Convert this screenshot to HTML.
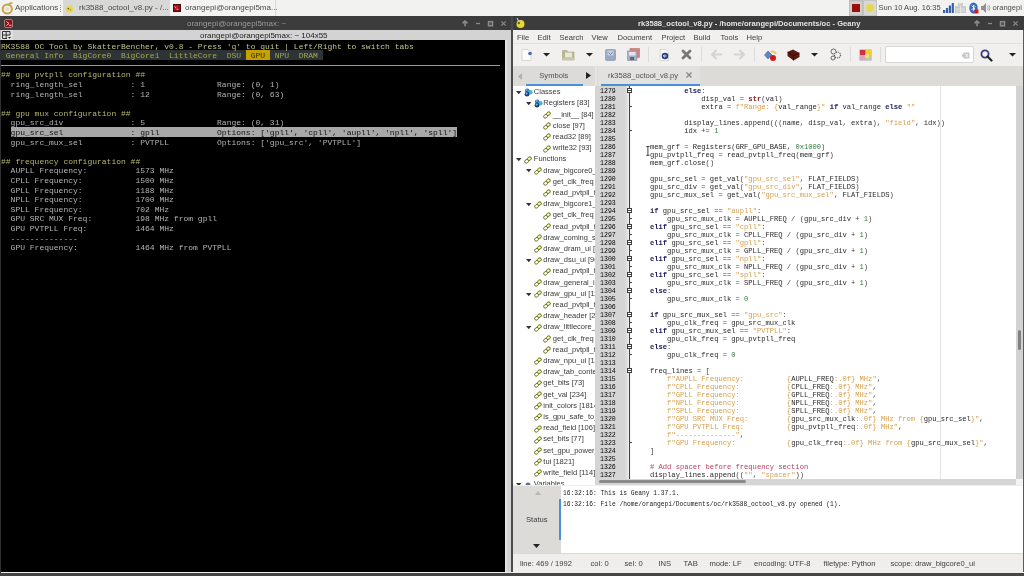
<!DOCTYPE html><html><head><meta charset="utf-8"><style>
*{margin:0;padding:0;box-sizing:border-box}
html,body{width:1024px;height:576px;overflow:hidden;background:#efeeed}
body{position:relative;font-family:"Liberation Sans",sans-serif}
.abs{position:absolute}
.t{position:absolute;white-space:pre;line-height:1}
.mono{font-family:"Liberation Mono",monospace}
</style></head><body>
<div id="root" style="position:absolute;left:0;top:0;width:1024px;height:576px;overflow:hidden;will-change:transform">

<div class="abs" style="left:0;top:0;width:1024px;height:16px;background:#f2f2f1"></div>
<div class="abs" style="left:0;top:16px;width:512px;height:14px;background:#3c3c3c"></div>
<div class="abs" style="left:0;top:30px;width:511px;height:10px;background:#d3d3d3"></div>
<div class="abs" style="left:0;top:40px;width:511px;height:532px;background:#000"></div>
<div class="abs" style="left:505px;top:40px;width:6px;height:532px;background:linear-gradient(90deg,#eeeeee,#d4d4d4 40%,#d4d4d4)"></div>
<div class="abs" style="left:512px;top:16px;width:512px;height:14px;background:#3c3c3c"></div>
<div class="abs" style="left:512px;top:30px;width:512px;height:13px;background:#f1f0ef"></div>
<div class="abs" style="left:512px;top:43px;width:512px;height:23px;background:#f1f0ef"></div>
<div class="abs" style="left:512px;top:66px;width:511px;height:20px;background:#dcdbd8"></div>
<div class="abs" style="left:512px;top:86px;width:83px;height:399px;background:#fff"></div>
<div class="abs" style="left:595px;top:86px;width:429px;height:399px;background:#fff"></div>
<div class="abs" style="left:595px;top:86px;width:30px;height:399px;background:#d5d5d5"></div>
<div class="abs" style="left:512px;top:485.5px;width:512px;height:68px;background:#fff"></div>
<div class="abs" style="left:512px;top:485.5px;width:49px;height:68px;background:#dcdbd8"></div>
<div class="abs" style="left:512px;top:553px;width:512px;height:19.8px;background:#efeeed"></div>
<div class="abs" style="left:0;top:572.8px;width:1024px;height:3.2px;background:#454545"></div>
<div class="abs" style="left:0;top:40px;width:1px;height:533px;background:#303030"></div>
<div class="abs" style="left:1.0px;top:50.20px;width:321.60px;height:9.6px;background:#2e3436"></div>
<div class="abs" style="left:245.80px;top:50.20px;width:24.00px;height:9.6px;background:#c4a000"></div>
<div class="abs" style="left:10.60px;top:127.00px;width:446.40px;height:9.6px;background:#a8a8a8"></div>
<div class="abs" style="left:1px;top:64.6px;width:499px;height:1px;background:#9a9a9a"></div>
<div class="abs mono" style="left:1.0px;top:41.5px;font-size:8px;line-height:9.6px;white-space:pre;color:#c8c8c8">
<div class="abs" style="left:0;top:0.00px;height:9.6px"><span style="color:#c4c48a">RK3588 OC Tool by SkatterBencher, v0.8 - Press 'q' to quit | Left/Right to switch tabs</span></div>
<div class="abs" style="left:0;top:9.60px;height:9.6px"><span style="color:#a6a64c"> General Info  BigCore0  BigCore1  LittleCore  DSU </span><span style="color:#2e2e10"> GPU </span><span style="color:#a6a64c"> NPU  DRAM </span></div>
<div class="abs" style="left:0;top:28.80px;height:9.6px"><span style="color:#b8b870">## gpu pvtpll configuration ##</span></div>
<div class="abs" style="left:0;top:38.40px;height:9.6px"><span style="color:#b4b4b4">  ring_length_sel          : 1               Range: (0, 1)</span></div>
<div class="abs" style="left:0;top:48.00px;height:9.6px"><span style="color:#b4b4b4">  ring_length_sel          : 12              Range: (0, 63)</span></div>
<div class="abs" style="left:0;top:67.20px;height:9.6px"><span style="color:#b8b870">## gpu mux configuration ##</span></div>
<div class="abs" style="left:0;top:76.80px;height:9.6px"><span style="color:#b4b4b4">  gpu_src_div              : 5               Range: (0, 31)</span></div>
<div class="abs" style="left:0;top:86.40px;height:9.6px"><span style="color:#101010">  gpu_src_sel              : gpll            Options: ['gpll', 'cpll', 'aupll', 'npll', 'spll']</span></div>
<div class="abs" style="left:0;top:96.00px;height:9.6px"><span style="color:#b4b4b4">  gpu_src_mux_sel          : PVTPLL          Options: ['gpu_src', 'PVTPLL']</span></div>
<div class="abs" style="left:0;top:115.20px;height:9.6px"><span style="color:#b8b870">## frequency configuration ##</span></div>
<div class="abs" style="left:0;top:124.80px;height:9.6px"><span style="color:#b4b4b4">  AUPLL Frequency:          1573 MHz</span></div>
<div class="abs" style="left:0;top:134.40px;height:9.6px"><span style="color:#b4b4b4">  CPLL Frequency:           1500 MHz</span></div>
<div class="abs" style="left:0;top:144.00px;height:9.6px"><span style="color:#b4b4b4">  GPLL Frequency:           1188 MHz</span></div>
<div class="abs" style="left:0;top:153.60px;height:9.6px"><span style="color:#b4b4b4">  NPLL Frequency:           1700 MHz</span></div>
<div class="abs" style="left:0;top:163.20px;height:9.6px"><span style="color:#b4b4b4">  SPLL Frequency:           702 MHz</span></div>
<div class="abs" style="left:0;top:172.80px;height:9.6px"><span style="color:#b4b4b4">  GPU SRC MUX Freq:         198 MHz from gpll</span></div>
<div class="abs" style="left:0;top:182.40px;height:9.6px"><span style="color:#b4b4b4">  GPU PVTPLL Freq:          1464 MHz</span></div>
<div class="abs" style="left:0;top:192.00px;height:9.6px"><span style="color:#b4b4b4">  --------------            </span></div>
<div class="abs" style="left:0;top:201.60px;height:9.6px"><span style="color:#b4b4b4">  GPU Frequency:            1464 MHz from PVTPLL</span></div>
</div>
<div class="abs" style="left:63px;top:0;width:107px;height:16px;background:#d8d8d6"></div>
<div class="abs" style="left:170px;top:0;width:106px;height:16px;background:#f3f3f2;border-right:1px solid #d8d8d8"></div>
<svg class="abs" style="left:1px;top:1px" width="13" height="14" viewBox="0 0 13 14"><circle cx="6.3" cy="8" r="4.6" fill="none" stroke="#c9a24a" stroke-width="2"/><circle cx="6.3" cy="8" r="2" fill="#e8dcb8"/><path d="M7 3.2 C8 1.2 10.5 0.8 12 1.5 C11 3.2 9 3.8 7 3.2Z" fill="#c9a24a"/></svg>
<div class="t" style="left:15px;top:3.9px;font-size:8px;color:#4a4a4a;">Applications</div>
<div class="abs" style="left:60px;top:5px;width:1px;height:7px;border-left:1px dotted #999"></div>
<svg class="abs" style="left:65px;top:4px" width="9" height="9" viewBox="0 0 9 9"><circle cx="4.5" cy="5" r="3.5" fill="#e8d84a"/><circle cx="3.3" cy="4.6" r="0.9" fill="#6a6010"/><circle cx="5.6" cy="5.8" r="0.7" fill="#9a9020"/></svg>
<div class="t" style="left:79px;top:3.9px;font-size:8px;color:#4a4a4a;">rk3588_octool_v8.py - /...</div>
<div class="abs" style="left:172.5px;top:4px;width:8px;height:8px;background:radial-gradient(circle at 40% 35%,#d02030,#700810);border:0.6px solid #401010"></div><svg class="abs" style="left:174px;top:6px" width="5" height="4" viewBox="0 0 5 4"><path d="M0.5 0.5 L2 2 M2.5 3.3 H4.5" stroke="#f0c0c0" stroke-width="0.8"/></svg>
<div class="t" style="left:185px;top:3.9px;font-size:8px;color:#4a4a4a;">orangepi@orangepi5ma...</div>
<div class="abs" style="left:849px;top:0;width:14px;height:16px;background:#cfcfcd;border:1px solid #bdbdbb"></div>
<div class="abs" style="left:852px;top:4px;width:8px;height:8px;background:#9a1010"></div>
<div class="abs" style="left:863px;top:0;width:14px;height:16px;background:#d8d8d6;border:1px solid #c4c4c2"></div>
<div class="abs" style="left:866px;top:4px;width:8px;height:8px;border-radius:50%;background:#e6d84a"></div>
<div class="t" style="left:878.5px;top:4.2px;font-size:7.55px;color:#4a4a4a;">Sun 10 Aug. 16:35</div>
<svg class="abs" style="left:943px;top:3px" width="11" height="10" viewBox="0 0 11 10"><rect x="0" y="7" width="2.2" height="3" fill="#3b5ea8"/><rect x="2.9" y="5" width="2.2" height="5" fill="#3b5ea8"/><rect x="5.8" y="2.5" width="2.2" height="7.5" fill="#3b5ea8"/><rect x="8.7" y="0" width="2.2" height="10" fill="#3b5ea8"/></svg>
<svg class="abs" style="left:955px;top:3px" width="11" height="10" viewBox="0 0 11 10"><rect x="0" y="3" width="11" height="7" fill="#c8c8c8"/><rect x="3" y="0" width="5" height="4" fill="#d0d0d0"/><path d="M1 6 H10 M1 8 H10 M5.5 3 V10" stroke="#e8e8e8" stroke-width="0.8"/></svg>
<svg class="abs" style="left:969px;top:2px" width="10" height="12" viewBox="0 0 10 12"><ellipse cx="4.5" cy="6" rx="4.2" ry="5.6" fill="#3a6cc0"/><path d="M2.5 3.5 L6 7 L4.5 8.5 V3 L6 4.5 L2.5 8" stroke="#fff" stroke-width="0.8" fill="none"/><rect x="5.5" y="7.5" width="4" height="4" fill="#d02020"/></svg>
<svg class="abs" style="left:981px;top:3px" width="10" height="10" viewBox="0 0 10 10"><path d="M0 3 H2 L5 0 V10 L2 7 H0Z" fill="#909090"/><path d="M6.5 3 Q8 5 6.5 7 M7.8 1.8 Q10 5 7.8 8.2" stroke="#a0a0a0" stroke-width="0.8" fill="none"/></svg>
<div class="t" style="left:992.5px;top:4.2px;font-size:7.55px;color:#4a4a4a;">orangepi</div>
<div class="abs" style="left:4px;top:19px;width:9px;height:9px;border-radius:2px;background:#8c1018;border:1px solid #a08080"></div>
<svg class="abs" style="left:6px;top:21px" width="6" height="5" viewBox="0 0 6 5"><path d="M0.5 0.5 L3 2.5 L0.5 4.5" stroke="#f0d0d0" stroke-width="0.9" fill="none"/><path d="M3 4.3 H5.5" stroke="#f0d0d0" stroke-width="0.9"/></svg>
<div class="t" style="left:187px;top:19.6px;font-size:8px;color:#9a9a9a;">orangepi@orangepi5max: ~</div>
<svg class="abs" style="left:461px;top:20px" width="47" height="7" viewBox="0 0 47 7"><path d="M1.6 3.4 L4 1 L6.4 3.4" stroke="#8a8a8a" stroke-width="1.6" fill="none"/><path d="M4 1.5 V6.2" stroke="#8a8a8a" stroke-width="1.6"/><path d="M15 3.5 H19" stroke="#8a8a8a" stroke-width="1.3"/><rect x="27.5" y="1.6" width="4" height="4.2" stroke="#8a8a8a" stroke-width="1.5" fill="#4a4a4a"/><path d="M40.3 1.3 L44.7 5.7 M44.7 1.3 L40.3 5.7" stroke="#8a8a8a" stroke-width="1.2"/></svg>
<div class="abs" style="left:0;top:30px;width:1px;height:10px;background:#bdbdbd"></div>
<div class="abs" style="left:1px;top:30px;width:12px;height:10px;background:#e0e0e0"></div>
<svg class="abs" style="left:2px;top:31px" width="9" height="8" viewBox="0 0 9 8"><path d="M0.5 0.5 H8 V4 M0.5 0.5 V7.5 H5 M0.5 4 H8 M4.2 0.5 V7.5" stroke="#202020" stroke-width="0.9" fill="none"/><path d="M6 6 H9 L7.5 7.8Z" fill="#202020"/></svg>
<div class="t" style="left:200px;top:32.4px;font-size:8px;color:#202020;">orangepi@orangepi5max: ~ 104x55</div>
<svg class="abs" style="left:515px;top:17px" width="11" height="12" viewBox="0 0 11 12"><circle cx="5.5" cy="7" r="4" fill="#e8d830"/><circle cx="3.8" cy="6" r="1.2" fill="#6a6a20"/><path d="M2 1 L3.5 4" stroke="#e0e0e0" stroke-width="1"/></svg>
<div class="t" style="left:638px;top:19.9px;font-size:7.6px;color:#e4e4e4;font-weight:bold">rk3588_octool_v8.py - /home/orangepi/Documents/oc - Geany</div>
<svg class="abs" style="left:973px;top:20px" width="47" height="7" viewBox="0 0 47 7"><path d="M1.6 3.4 L4 1 L6.4 3.4" stroke="#8a8a8a" stroke-width="1.6" fill="none"/><path d="M4 1.5 V6.2" stroke="#8a8a8a" stroke-width="1.6"/><path d="M15 3.5 H19" stroke="#8a8a8a" stroke-width="1.3"/><rect x="27.5" y="1.6" width="4" height="4.2" stroke="#8a8a8a" stroke-width="1.5" fill="#4a4a4a"/><path d="M40.3 1.3 L44.7 5.7 M44.7 1.3 L40.3 5.7" stroke="#8a8a8a" stroke-width="1.2"/></svg>
<div class="abs" style="left:511px;top:16px;width:2px;height:556px;background:#4a4a4a"></div>
<div class="t" style="left:517px;top:33.9px;font-size:7.6px;color:#3c3c3c;">File</div>
<div class="t" style="left:537.5px;top:33.9px;font-size:7.6px;color:#3c3c3c;">Edit</div>
<div class="t" style="left:559.5px;top:33.9px;font-size:7.6px;color:#3c3c3c;">Search</div>
<div class="t" style="left:591.5px;top:33.9px;font-size:7.6px;color:#3c3c3c;">View</div>
<div class="t" style="left:617.5px;top:33.9px;font-size:7.6px;color:#3c3c3c;">Document</div>
<div class="t" style="left:661.5px;top:33.9px;font-size:7.6px;color:#3c3c3c;">Project</div>
<div class="t" style="left:693.5px;top:33.9px;font-size:7.6px;color:#3c3c3c;">Build</div>
<div class="t" style="left:720.5px;top:33.9px;font-size:7.6px;color:#3c3c3c;">Tools</div>
<div class="t" style="left:746.5px;top:33.9px;font-size:7.6px;color:#3c3c3c;">Help</div>
<div class="abs" style="left:513px;top:42.5px;width:511px;height:1px;background:#e2e1df"></div>
<svg class="abs" style="left:521px;top:49px" width="12" height="12" viewBox="0 0 12 12"><path d="M1 0.5 H7 L10 3.5 V11.5 H1Z" fill="#fbfbfb" stroke="#cfcfcf" stroke-width="0.8"/><circle cx="9" cy="4.5" r="1.8" fill="#4a6ab0"/></svg>
<svg class="abs" style="left:543px;top:53px" width="7" height="4" viewBox="0 0 7 4"><path d="M0 0 H7 L3.5 3.5Z" fill="#222"/></svg>
<svg class="abs" style="left:562px;top:49px" width="13" height="12" viewBox="0 0 13 12"><path d="M0.5 1.5 H5 L6 3 H12 V11 H0.5Z" fill="#b8b890" stroke="#a8a880" stroke-width="0.6"/><rect x="3" y="3.5" width="7" height="5" fill="#e8e8d8"/><rect x="0.5" y="8.5" width="12" height="2.5" fill="#c8c8a8"/></svg>
<svg class="abs" style="left:586px;top:53px" width="7" height="4" viewBox="0 0 7 4"><path d="M0 0 H7 L3.5 3.5Z" fill="#222"/></svg>
<svg class="abs" style="left:605px;top:49px" width="11" height="12" viewBox="0 0 11 12"><rect x="0.5" y="0.5" width="10" height="11" rx="1" fill="#9aa8c0" stroke="#8090a8" stroke-width="0.6"/><rect x="2.5" y="1.5" width="6" height="5" fill="#c8d0e0"/><path d="M3.5 3.5 L5.5 5.5 L7.5 3.5" stroke="#6a7a98" stroke-width="0.9" fill="none"/></svg>
<svg class="abs" style="left:627px;top:48px" width="13" height="13" viewBox="0 0 13 13"><rect x="3" y="0.5" width="9.5" height="9" fill="#d88080" stroke="#b06060" stroke-width="0.5"/><rect x="0.5" y="3" width="9.5" height="9.5" fill="#a8b0c0" stroke="#8890a0" stroke-width="0.6"/><rect x="2" y="4" width="6.5" height="3.5" fill="#e0e4ec"/><rect x="3" y="9" width="4" height="3" fill="#606878"/></svg>
<div class="abs" style="left:648px;top:47px;width:1px;height:15px;background:#dddcda"></div>
<svg class="abs" style="left:659px;top:49px" width="11" height="12" viewBox="0 0 11 12"><path d="M1 0.5 H7 L9.5 3 V11.5 H1Z" fill="#fbfbfb" stroke="#cfcfcf" stroke-width="0.8"/><circle cx="6" cy="7" r="3.3" fill="#2a3e78"/><path d="M7.5 7 H4.5 M5.8 5.6 L4.4 7 L5.8 8.4" stroke="#fff" stroke-width="0.9" fill="none"/></svg>
<svg class="abs" style="left:681px;top:49px" width="11" height="11" viewBox="0 0 11 11"><path d="M2 2 L9 9 M9 2 L2 9" stroke="#777" stroke-width="2.8" stroke-linecap="round"/></svg>
<div class="abs" style="left:701px;top:47px;width:1px;height:15px;background:#dddcda"></div>
<svg class="abs" style="left:711px;top:49px" width="12" height="11" viewBox="0 0 12 11"><path d="M5.5 1 L1 5.5 L5.5 10 M1 5.5 H11" stroke="#d4d4d4" stroke-width="2.2" fill="none"/></svg>
<svg class="abs" style="left:733px;top:49px" width="12" height="11" viewBox="0 0 12 11"><path d="M6.5 1 L11 5.5 L6.5 10 M11 5.5 H1" stroke="#d4d4d4" stroke-width="2.2" fill="none"/></svg>
<div class="abs" style="left:754px;top:47px;width:1px;height:15px;background:#dddcda"></div>
<svg class="abs" style="left:764px;top:48px" width="13" height="14" viewBox="0 0 13 14"><path d="M4 3 L8 7 L4 11 L0.5 7Z" fill="#5a88c8" stroke="#3a5890" stroke-width="0.5"/><path d="M6.5 4 A4 4 0 0 1 12 6" stroke="#e8d060" stroke-width="2" fill="none"/><circle cx="9" cy="10" r="3" fill="#d01818"/></svg>
<svg class="abs" style="left:787px;top:49px" width="13" height="12" viewBox="0 0 13 12"><path d="M0.5 3 L6 0.5 L12.5 4 L12.5 8 L6.5 11.5 L0.5 7Z" fill="#5a1a10"/><path d="M0.5 3 L6.5 6.5 L12.5 4 M6.5 6.5 V11.5" stroke="#2a0a05" stroke-width="0.7" fill="none"/></svg>
<svg class="abs" style="left:811px;top:53px" width="7" height="4" viewBox="0 0 7 4"><path d="M0 0 H7 L3.5 3.5Z" fill="#222"/></svg>
<svg class="abs" style="left:830px;top:48px" width="12" height="13" viewBox="0 0 12 13"><circle cx="3.5" cy="3.5" r="2.5" fill="#f0f0f0" stroke="#666" stroke-width="1"/><circle cx="7.5" cy="7" r="3" fill="#f0f0f0" stroke="#666" stroke-width="1.2" stroke-dasharray="1.2 0.8"/><circle cx="3" cy="10" r="2" fill="#f0f0f0" stroke="#666" stroke-width="1"/></svg>
<div class="abs" style="left:850px;top:47px;width:1px;height:15px;background:#dddcda"></div>
<svg class="abs" style="left:859px;top:49px" width="13" height="12" viewBox="0 0 13 12"><rect x="0.5" y="0.5" width="12" height="11" fill="#a0a8b8"/><rect x="1" y="1" width="5.5" height="5" fill="#d03040"/><rect x="6.5" y="1" width="5.5" height="5" fill="#f0d030"/><rect x="1" y="6" width="5.5" height="5" fill="#e0a0c0"/><rect x="6.5" y="6" width="5.5" height="5" fill="#c0c8a0"/><circle cx="8" cy="7" r="2.2" fill="#f0e080"/></svg>
<div class="abs" style="left:880px;top:47px;width:1px;height:15px;background:#dddcda"></div>
<div class="abs" style="left:885px;top:46px;width:89px;height:17px;background:#fff;border:1px solid #d6d5d3;border-radius:2px"></div>
<svg class="abs" style="left:961px;top:52px" width="9" height="7" viewBox="0 0 9 7"><path d="M0.5 3.5 L3 0.5 H8.5 V6.5 H3Z" fill="#c8c8c8"/><path d="M4.5 2 L7 5 M7 2 L4.5 5" stroke="#fff" stroke-width="0.8"/></svg>
<svg class="abs" style="left:980px;top:49px" width="13" height="13" viewBox="0 0 13 13"><circle cx="5" cy="5" r="3.6" fill="none" stroke="#3a3a78" stroke-width="1.8"/><path d="M7.5 7.5 L11.5 11.5" stroke="#222" stroke-width="2.2" stroke-linecap="round"/></svg>
<svg class="abs" style="left:1009px;top:53px" width="7" height="4" viewBox="0 0 7 4"><path d="M0 0 H7 L3.5 3.5Z" fill="#222"/></svg>
<div class="abs" style="left:1023px;top:30px;width:1px;height:542px;background:#5a5a5a"></div>
<div class="abs" style="left:595px;top:66px;width:2px;height:20px;background:#e6e5e3"></div>
<svg class="abs" style="left:518px;top:73px" width="4" height="7" viewBox="0 0 4 7"><path d="M4 0 V7 L0 3.5Z" fill="#b0b0b0"/></svg>
<div class="t" style="left:539.3px;top:72.2px;font-size:7.6px;color:#505050;">Symbols</div>
<svg class="abs" style="left:586px;top:72px" width="5" height="7" viewBox="0 0 5 7"><path d="M0 0 V7 L5 3.5Z" fill="#222"/></svg>
<div class="abs" style="left:526px;top:84px;width:57px;height:2px;background:#4a90d9"></div>
<div class="abs" style="left:598px;top:66px;width:102px;height:20px;background:#e2e1de"></div>
<div class="t" style="left:608px;top:72.2px;font-size:7.6px;color:#505050;">rk3588_octool_v8.py</div>
<svg class="abs" style="left:686px;top:72px" width="6" height="6" viewBox="0 0 6 6"><path d="M0.5 0.5 L5.5 5.5 M5.5 0.5 L0.5 5.5" stroke="#888" stroke-width="1.4"/></svg>
<div class="abs" style="left:601px;top:84px;width:99px;height:2px;background:#4a90d9"></div>
<div class="abs" style="left:513px;top:86px;width:82px;height:399px;overflow:hidden">
<svg class="abs" style="left:3.0px;top:5.0px" width="6" height="4" viewBox="0 0 6 4"><path d="M0 0 H5.5 L2.75 3.2Z" fill="#333"/></svg>
<svg class="abs" style="left:11.0px;top:2.1px" width="9" height="9" viewBox="0 0 9 9"><circle cx="3.2" cy="2.6" r="2.2" fill="#2a6ab0"/><circle cx="6.3" cy="4.3" r="2.3" fill="#40b8c8"/><circle cx="3" cy="6.2" r="2.4" fill="#1a3a88"/><circle cx="2.6" cy="5.6" r="1" fill="#80c0f0"/><circle cx="2.8" cy="2" r="0.8" fill="#a0d0f0"/></svg>
<div class="t" style="left:20.8px;top:2.2px;font-size:7.5px;color:#3a3a3a">Classes</div>
<svg class="abs" style="left:12.5px;top:16.2px" width="6" height="4" viewBox="0 0 6 4"><path d="M0 0 H5.5 L2.75 3.2Z" fill="#333"/></svg>
<svg class="abs" style="left:20.5px;top:13.3px" width="9" height="9" viewBox="0 0 9 9"><circle cx="3.2" cy="2.6" r="2.2" fill="#2a6ab0"/><circle cx="6.3" cy="4.3" r="2.3" fill="#40b8c8"/><circle cx="3" cy="6.2" r="2.4" fill="#1a3a88"/><circle cx="2.6" cy="5.6" r="1" fill="#80c0f0"/><circle cx="2.8" cy="2" r="0.8" fill="#a0d0f0"/></svg>
<div class="t" style="left:30.3px;top:13.4px;font-size:7.5px;color:#3a3a3a">Registers [83]</div>
<svg class="abs" style="left:30.0px;top:25.0px" width="8" height="8" viewBox="0 0 8 8"><ellipse cx="2.6" cy="5.3" rx="2.1" ry="1.7" transform="rotate(-35 2.6 5.3)" fill="none" fill="#e6ea88" stroke="#6a7020" stroke-width="0.9"/><ellipse cx="5.4" cy="2.7" rx="2.1" ry="1.7" transform="rotate(-35 5.4 2.7)" fill="#e6ea88" stroke="#6a7020" stroke-width="0.9"/><ellipse cx="2.6" cy="5.3" rx="0.8" ry="0.5" transform="rotate(-35 2.6 5.3)" fill="#fff"/><ellipse cx="5.4" cy="2.7" rx="0.8" ry="0.5" transform="rotate(-35 5.4 2.7)" fill="#fff"/></svg>
<div class="t" style="left:39.8px;top:24.6px;font-size:7.5px;color:#3a3a3a">__init__ [84]</div>
<svg class="abs" style="left:30.0px;top:36.2px" width="8" height="8" viewBox="0 0 8 8"><ellipse cx="2.6" cy="5.3" rx="2.1" ry="1.7" transform="rotate(-35 2.6 5.3)" fill="none" fill="#e6ea88" stroke="#6a7020" stroke-width="0.9"/><ellipse cx="5.4" cy="2.7" rx="2.1" ry="1.7" transform="rotate(-35 5.4 2.7)" fill="#e6ea88" stroke="#6a7020" stroke-width="0.9"/><ellipse cx="2.6" cy="5.3" rx="0.8" ry="0.5" transform="rotate(-35 2.6 5.3)" fill="#fff"/><ellipse cx="5.4" cy="2.7" rx="0.8" ry="0.5" transform="rotate(-35 5.4 2.7)" fill="#fff"/></svg>
<div class="t" style="left:39.8px;top:35.8px;font-size:7.5px;color:#3a3a3a">close [97]</div>
<svg class="abs" style="left:30.0px;top:47.4px" width="8" height="8" viewBox="0 0 8 8"><ellipse cx="2.6" cy="5.3" rx="2.1" ry="1.7" transform="rotate(-35 2.6 5.3)" fill="none" fill="#e6ea88" stroke="#6a7020" stroke-width="0.9"/><ellipse cx="5.4" cy="2.7" rx="2.1" ry="1.7" transform="rotate(-35 5.4 2.7)" fill="#e6ea88" stroke="#6a7020" stroke-width="0.9"/><ellipse cx="2.6" cy="5.3" rx="0.8" ry="0.5" transform="rotate(-35 2.6 5.3)" fill="#fff"/><ellipse cx="5.4" cy="2.7" rx="0.8" ry="0.5" transform="rotate(-35 5.4 2.7)" fill="#fff"/></svg>
<div class="t" style="left:39.8px;top:47.0px;font-size:7.5px;color:#3a3a3a">read32 [89]</div>
<svg class="abs" style="left:30.0px;top:58.6px" width="8" height="8" viewBox="0 0 8 8"><ellipse cx="2.6" cy="5.3" rx="2.1" ry="1.7" transform="rotate(-35 2.6 5.3)" fill="none" fill="#e6ea88" stroke="#6a7020" stroke-width="0.9"/><ellipse cx="5.4" cy="2.7" rx="2.1" ry="1.7" transform="rotate(-35 5.4 2.7)" fill="#e6ea88" stroke="#6a7020" stroke-width="0.9"/><ellipse cx="2.6" cy="5.3" rx="0.8" ry="0.5" transform="rotate(-35 2.6 5.3)" fill="#fff"/><ellipse cx="5.4" cy="2.7" rx="0.8" ry="0.5" transform="rotate(-35 5.4 2.7)" fill="#fff"/></svg>
<div class="t" style="left:39.8px;top:58.2px;font-size:7.5px;color:#3a3a3a">write32 [93]</div>
<svg class="abs" style="left:3.0px;top:72.2px" width="6" height="4" viewBox="0 0 6 4"><path d="M0 0 H5.5 L2.75 3.2Z" fill="#333"/></svg>
<svg class="abs" style="left:11.0px;top:69.8px" width="8" height="8" viewBox="0 0 8 8"><ellipse cx="2.6" cy="5.3" rx="2.1" ry="1.7" transform="rotate(-35 2.6 5.3)" fill="none" fill="#e6ea88" stroke="#6a7020" stroke-width="0.9"/><ellipse cx="5.4" cy="2.7" rx="2.1" ry="1.7" transform="rotate(-35 5.4 2.7)" fill="#e6ea88" stroke="#6a7020" stroke-width="0.9"/><ellipse cx="2.6" cy="5.3" rx="0.8" ry="0.5" transform="rotate(-35 2.6 5.3)" fill="#fff"/><ellipse cx="5.4" cy="2.7" rx="0.8" ry="0.5" transform="rotate(-35 5.4 2.7)" fill="#fff"/></svg>
<div class="t" style="left:20.8px;top:69.4px;font-size:7.5px;color:#3a3a3a">Functions</div>
<svg class="abs" style="left:12.5px;top:83.4px" width="6" height="4" viewBox="0 0 6 4"><path d="M0 0 H5.5 L2.75 3.2Z" fill="#333"/></svg>
<svg class="abs" style="left:20.5px;top:81.0px" width="8" height="8" viewBox="0 0 8 8"><ellipse cx="2.6" cy="5.3" rx="2.1" ry="1.7" transform="rotate(-35 2.6 5.3)" fill="none" fill="#e6ea88" stroke="#6a7020" stroke-width="0.9"/><ellipse cx="5.4" cy="2.7" rx="2.1" ry="1.7" transform="rotate(-35 5.4 2.7)" fill="#e6ea88" stroke="#6a7020" stroke-width="0.9"/><ellipse cx="2.6" cy="5.3" rx="0.8" ry="0.5" transform="rotate(-35 2.6 5.3)" fill="#fff"/><ellipse cx="5.4" cy="2.7" rx="0.8" ry="0.5" transform="rotate(-35 5.4 2.7)" fill="#fff"/></svg>
<div class="t" style="left:30.3px;top:80.6px;font-size:7.5px;color:#3a3a3a">draw_bigcore0_ui [1001]</div>
<svg class="abs" style="left:30.0px;top:92.2px" width="8" height="8" viewBox="0 0 8 8"><ellipse cx="2.6" cy="5.3" rx="2.1" ry="1.7" transform="rotate(-35 2.6 5.3)" fill="none" fill="#e6ea88" stroke="#6a7020" stroke-width="0.9"/><ellipse cx="5.4" cy="2.7" rx="2.1" ry="1.7" transform="rotate(-35 5.4 2.7)" fill="#e6ea88" stroke="#6a7020" stroke-width="0.9"/><ellipse cx="2.6" cy="5.3" rx="0.8" ry="0.5" transform="rotate(-35 2.6 5.3)" fill="#fff"/><ellipse cx="5.4" cy="2.7" rx="0.8" ry="0.5" transform="rotate(-35 5.4 2.7)" fill="#fff"/></svg>
<div class="t" style="left:39.8px;top:91.8px;font-size:7.5px;color:#3a3a3a">get_clk_freq [1010]</div>
<svg class="abs" style="left:30.0px;top:103.4px" width="8" height="8" viewBox="0 0 8 8"><ellipse cx="2.6" cy="5.3" rx="2.1" ry="1.7" transform="rotate(-35 2.6 5.3)" fill="none" fill="#e6ea88" stroke="#6a7020" stroke-width="0.9"/><ellipse cx="5.4" cy="2.7" rx="2.1" ry="1.7" transform="rotate(-35 5.4 2.7)" fill="#e6ea88" stroke="#6a7020" stroke-width="0.9"/><ellipse cx="2.6" cy="5.3" rx="0.8" ry="0.5" transform="rotate(-35 2.6 5.3)" fill="#fff"/><ellipse cx="5.4" cy="2.7" rx="0.8" ry="0.5" transform="rotate(-35 5.4 2.7)" fill="#fff"/></svg>
<div class="t" style="left:39.8px;top:103.0px;font-size:7.5px;color:#3a3a3a">read_pvtpll_freq [1003]</div>
<svg class="abs" style="left:12.5px;top:117.0px" width="6" height="4" viewBox="0 0 6 4"><path d="M0 0 H5.5 L2.75 3.2Z" fill="#333"/></svg>
<svg class="abs" style="left:20.5px;top:114.6px" width="8" height="8" viewBox="0 0 8 8"><ellipse cx="2.6" cy="5.3" rx="2.1" ry="1.7" transform="rotate(-35 2.6 5.3)" fill="none" fill="#e6ea88" stroke="#6a7020" stroke-width="0.9"/><ellipse cx="5.4" cy="2.7" rx="2.1" ry="1.7" transform="rotate(-35 5.4 2.7)" fill="#e6ea88" stroke="#6a7020" stroke-width="0.9"/><ellipse cx="2.6" cy="5.3" rx="0.8" ry="0.5" transform="rotate(-35 2.6 5.3)" fill="#fff"/><ellipse cx="5.4" cy="2.7" rx="0.8" ry="0.5" transform="rotate(-35 5.4 2.7)" fill="#fff"/></svg>
<div class="t" style="left:30.3px;top:114.2px;font-size:7.5px;color:#3a3a3a">draw_bigcore1_ui [1101]</div>
<svg class="abs" style="left:30.0px;top:125.8px" width="8" height="8" viewBox="0 0 8 8"><ellipse cx="2.6" cy="5.3" rx="2.1" ry="1.7" transform="rotate(-35 2.6 5.3)" fill="none" fill="#e6ea88" stroke="#6a7020" stroke-width="0.9"/><ellipse cx="5.4" cy="2.7" rx="2.1" ry="1.7" transform="rotate(-35 5.4 2.7)" fill="#e6ea88" stroke="#6a7020" stroke-width="0.9"/><ellipse cx="2.6" cy="5.3" rx="0.8" ry="0.5" transform="rotate(-35 2.6 5.3)" fill="#fff"/><ellipse cx="5.4" cy="2.7" rx="0.8" ry="0.5" transform="rotate(-35 5.4 2.7)" fill="#fff"/></svg>
<div class="t" style="left:39.8px;top:125.4px;font-size:7.5px;color:#3a3a3a">get_clk_freq [1110]</div>
<svg class="abs" style="left:30.0px;top:137.0px" width="8" height="8" viewBox="0 0 8 8"><ellipse cx="2.6" cy="5.3" rx="2.1" ry="1.7" transform="rotate(-35 2.6 5.3)" fill="none" fill="#e6ea88" stroke="#6a7020" stroke-width="0.9"/><ellipse cx="5.4" cy="2.7" rx="2.1" ry="1.7" transform="rotate(-35 5.4 2.7)" fill="#e6ea88" stroke="#6a7020" stroke-width="0.9"/><ellipse cx="2.6" cy="5.3" rx="0.8" ry="0.5" transform="rotate(-35 2.6 5.3)" fill="#fff"/><ellipse cx="5.4" cy="2.7" rx="0.8" ry="0.5" transform="rotate(-35 5.4 2.7)" fill="#fff"/></svg>
<div class="t" style="left:39.8px;top:136.6px;font-size:7.5px;color:#3a3a3a">read_pvtpll_freq [1103]</div>
<svg class="abs" style="left:20.5px;top:148.2px" width="8" height="8" viewBox="0 0 8 8"><ellipse cx="2.6" cy="5.3" rx="2.1" ry="1.7" transform="rotate(-35 2.6 5.3)" fill="none" fill="#e6ea88" stroke="#6a7020" stroke-width="0.9"/><ellipse cx="5.4" cy="2.7" rx="2.1" ry="1.7" transform="rotate(-35 5.4 2.7)" fill="#e6ea88" stroke="#6a7020" stroke-width="0.9"/><ellipse cx="2.6" cy="5.3" rx="0.8" ry="0.5" transform="rotate(-35 2.6 5.3)" fill="#fff"/><ellipse cx="5.4" cy="2.7" rx="0.8" ry="0.5" transform="rotate(-35 5.4 2.7)" fill="#fff"/></svg>
<div class="t" style="left:30.3px;top:147.8px;font-size:7.5px;color:#3a3a3a">draw_coming_soon [1800]</div>
<svg class="abs" style="left:20.5px;top:159.4px" width="8" height="8" viewBox="0 0 8 8"><ellipse cx="2.6" cy="5.3" rx="2.1" ry="1.7" transform="rotate(-35 2.6 5.3)" fill="none" fill="#e6ea88" stroke="#6a7020" stroke-width="0.9"/><ellipse cx="5.4" cy="2.7" rx="2.1" ry="1.7" transform="rotate(-35 5.4 2.7)" fill="#e6ea88" stroke="#6a7020" stroke-width="0.9"/><ellipse cx="2.6" cy="5.3" rx="0.8" ry="0.5" transform="rotate(-35 2.6 5.3)" fill="#fff"/><ellipse cx="5.4" cy="2.7" rx="0.8" ry="0.5" transform="rotate(-35 5.4 2.7)" fill="#fff"/></svg>
<div class="t" style="left:30.3px;top:159.0px;font-size:7.5px;color:#3a3a3a">draw_dram_ui [1700]</div>
<svg class="abs" style="left:12.5px;top:173.0px" width="6" height="4" viewBox="0 0 6 4"><path d="M0 0 H5.5 L2.75 3.2Z" fill="#333"/></svg>
<svg class="abs" style="left:20.5px;top:170.6px" width="8" height="8" viewBox="0 0 8 8"><ellipse cx="2.6" cy="5.3" rx="2.1" ry="1.7" transform="rotate(-35 2.6 5.3)" fill="none" fill="#e6ea88" stroke="#6a7020" stroke-width="0.9"/><ellipse cx="5.4" cy="2.7" rx="2.1" ry="1.7" transform="rotate(-35 5.4 2.7)" fill="#e6ea88" stroke="#6a7020" stroke-width="0.9"/><ellipse cx="2.6" cy="5.3" rx="0.8" ry="0.5" transform="rotate(-35 2.6 5.3)" fill="#fff"/><ellipse cx="5.4" cy="2.7" rx="0.8" ry="0.5" transform="rotate(-35 5.4 2.7)" fill="#fff"/></svg>
<div class="t" style="left:30.3px;top:170.2px;font-size:7.5px;color:#3a3a3a">draw_dsu_ui [960]</div>
<svg class="abs" style="left:30.0px;top:181.8px" width="8" height="8" viewBox="0 0 8 8"><ellipse cx="2.6" cy="5.3" rx="2.1" ry="1.7" transform="rotate(-35 2.6 5.3)" fill="none" fill="#e6ea88" stroke="#6a7020" stroke-width="0.9"/><ellipse cx="5.4" cy="2.7" rx="2.1" ry="1.7" transform="rotate(-35 5.4 2.7)" fill="#e6ea88" stroke="#6a7020" stroke-width="0.9"/><ellipse cx="2.6" cy="5.3" rx="0.8" ry="0.5" transform="rotate(-35 2.6 5.3)" fill="#fff"/><ellipse cx="5.4" cy="2.7" rx="0.8" ry="0.5" transform="rotate(-35 5.4 2.7)" fill="#fff"/></svg>
<div class="t" style="left:39.8px;top:181.4px;font-size:7.5px;color:#3a3a3a">read_pvtpll_freq [963]</div>
<svg class="abs" style="left:20.5px;top:193.0px" width="8" height="8" viewBox="0 0 8 8"><ellipse cx="2.6" cy="5.3" rx="2.1" ry="1.7" transform="rotate(-35 2.6 5.3)" fill="none" fill="#e6ea88" stroke="#6a7020" stroke-width="0.9"/><ellipse cx="5.4" cy="2.7" rx="2.1" ry="1.7" transform="rotate(-35 5.4 2.7)" fill="#e6ea88" stroke="#6a7020" stroke-width="0.9"/><ellipse cx="2.6" cy="5.3" rx="0.8" ry="0.5" transform="rotate(-35 2.6 5.3)" fill="#fff"/><ellipse cx="5.4" cy="2.7" rx="0.8" ry="0.5" transform="rotate(-35 5.4 2.7)" fill="#fff"/></svg>
<div class="t" style="left:30.3px;top:192.6px;font-size:7.5px;color:#3a3a3a">draw_general_info [300]</div>
<svg class="abs" style="left:12.5px;top:206.6px" width="6" height="4" viewBox="0 0 6 4"><path d="M0 0 H5.5 L2.75 3.2Z" fill="#333"/></svg>
<svg class="abs" style="left:20.5px;top:204.2px" width="8" height="8" viewBox="0 0 8 8"><ellipse cx="2.6" cy="5.3" rx="2.1" ry="1.7" transform="rotate(-35 2.6 5.3)" fill="none" fill="#e6ea88" stroke="#6a7020" stroke-width="0.9"/><ellipse cx="5.4" cy="2.7" rx="2.1" ry="1.7" transform="rotate(-35 5.4 2.7)" fill="#e6ea88" stroke="#6a7020" stroke-width="0.9"/><ellipse cx="2.6" cy="5.3" rx="0.8" ry="0.5" transform="rotate(-35 2.6 5.3)" fill="#fff"/><ellipse cx="5.4" cy="2.7" rx="0.8" ry="0.5" transform="rotate(-35 5.4 2.7)" fill="#fff"/></svg>
<div class="t" style="left:30.3px;top:203.8px;font-size:7.5px;color:#3a3a3a">draw_gpu_ui [1190]</div>
<svg class="abs" style="left:30.0px;top:215.4px" width="8" height="8" viewBox="0 0 8 8"><ellipse cx="2.6" cy="5.3" rx="2.1" ry="1.7" transform="rotate(-35 2.6 5.3)" fill="none" fill="#e6ea88" stroke="#6a7020" stroke-width="0.9"/><ellipse cx="5.4" cy="2.7" rx="2.1" ry="1.7" transform="rotate(-35 5.4 2.7)" fill="#e6ea88" stroke="#6a7020" stroke-width="0.9"/><ellipse cx="2.6" cy="5.3" rx="0.8" ry="0.5" transform="rotate(-35 2.6 5.3)" fill="#fff"/><ellipse cx="5.4" cy="2.7" rx="0.8" ry="0.5" transform="rotate(-35 5.4 2.7)" fill="#fff"/></svg>
<div class="t" style="left:39.8px;top:215.0px;font-size:7.5px;color:#3a3a3a">read_pvtpll_freq [1193]</div>
<svg class="abs" style="left:20.5px;top:226.6px" width="8" height="8" viewBox="0 0 8 8"><ellipse cx="2.6" cy="5.3" rx="2.1" ry="1.7" transform="rotate(-35 2.6 5.3)" fill="none" fill="#e6ea88" stroke="#6a7020" stroke-width="0.9"/><ellipse cx="5.4" cy="2.7" rx="2.1" ry="1.7" transform="rotate(-35 5.4 2.7)" fill="#e6ea88" stroke="#6a7020" stroke-width="0.9"/><ellipse cx="2.6" cy="5.3" rx="0.8" ry="0.5" transform="rotate(-35 2.6 5.3)" fill="#fff"/><ellipse cx="5.4" cy="2.7" rx="0.8" ry="0.5" transform="rotate(-35 5.4 2.7)" fill="#fff"/></svg>
<div class="t" style="left:30.3px;top:226.2px;font-size:7.5px;color:#3a3a3a">draw_header [260]</div>
<svg class="abs" style="left:12.5px;top:240.2px" width="6" height="4" viewBox="0 0 6 4"><path d="M0 0 H5.5 L2.75 3.2Z" fill="#333"/></svg>
<svg class="abs" style="left:20.5px;top:237.8px" width="8" height="8" viewBox="0 0 8 8"><ellipse cx="2.6" cy="5.3" rx="2.1" ry="1.7" transform="rotate(-35 2.6 5.3)" fill="none" fill="#e6ea88" stroke="#6a7020" stroke-width="0.9"/><ellipse cx="5.4" cy="2.7" rx="2.1" ry="1.7" transform="rotate(-35 5.4 2.7)" fill="#e6ea88" stroke="#6a7020" stroke-width="0.9"/><ellipse cx="2.6" cy="5.3" rx="0.8" ry="0.5" transform="rotate(-35 2.6 5.3)" fill="#fff"/><ellipse cx="5.4" cy="2.7" rx="0.8" ry="0.5" transform="rotate(-35 5.4 2.7)" fill="#fff"/></svg>
<div class="t" style="left:30.3px;top:237.4px;font-size:7.5px;color:#3a3a3a">draw_littlecore_ui [800]</div>
<svg class="abs" style="left:30.0px;top:249.0px" width="8" height="8" viewBox="0 0 8 8"><ellipse cx="2.6" cy="5.3" rx="2.1" ry="1.7" transform="rotate(-35 2.6 5.3)" fill="none" fill="#e6ea88" stroke="#6a7020" stroke-width="0.9"/><ellipse cx="5.4" cy="2.7" rx="2.1" ry="1.7" transform="rotate(-35 5.4 2.7)" fill="#e6ea88" stroke="#6a7020" stroke-width="0.9"/><ellipse cx="2.6" cy="5.3" rx="0.8" ry="0.5" transform="rotate(-35 2.6 5.3)" fill="#fff"/><ellipse cx="5.4" cy="2.7" rx="0.8" ry="0.5" transform="rotate(-35 5.4 2.7)" fill="#fff"/></svg>
<div class="t" style="left:39.8px;top:248.6px;font-size:7.5px;color:#3a3a3a">get_clk_freq [810]</div>
<svg class="abs" style="left:30.0px;top:260.2px" width="8" height="8" viewBox="0 0 8 8"><ellipse cx="2.6" cy="5.3" rx="2.1" ry="1.7" transform="rotate(-35 2.6 5.3)" fill="none" fill="#e6ea88" stroke="#6a7020" stroke-width="0.9"/><ellipse cx="5.4" cy="2.7" rx="2.1" ry="1.7" transform="rotate(-35 5.4 2.7)" fill="#e6ea88" stroke="#6a7020" stroke-width="0.9"/><ellipse cx="2.6" cy="5.3" rx="0.8" ry="0.5" transform="rotate(-35 2.6 5.3)" fill="#fff"/><ellipse cx="5.4" cy="2.7" rx="0.8" ry="0.5" transform="rotate(-35 5.4 2.7)" fill="#fff"/></svg>
<div class="t" style="left:39.8px;top:259.8px;font-size:7.5px;color:#3a3a3a">read_pvtpll_freq [803]</div>
<svg class="abs" style="left:20.5px;top:271.4px" width="8" height="8" viewBox="0 0 8 8"><ellipse cx="2.6" cy="5.3" rx="2.1" ry="1.7" transform="rotate(-35 2.6 5.3)" fill="none" fill="#e6ea88" stroke="#6a7020" stroke-width="0.9"/><ellipse cx="5.4" cy="2.7" rx="2.1" ry="1.7" transform="rotate(-35 5.4 2.7)" fill="#e6ea88" stroke="#6a7020" stroke-width="0.9"/><ellipse cx="2.6" cy="5.3" rx="0.8" ry="0.5" transform="rotate(-35 2.6 5.3)" fill="#fff"/><ellipse cx="5.4" cy="2.7" rx="0.8" ry="0.5" transform="rotate(-35 5.4 2.7)" fill="#fff"/></svg>
<div class="t" style="left:30.3px;top:271.0px;font-size:7.5px;color:#3a3a3a">draw_npu_ui [1350]</div>
<svg class="abs" style="left:20.5px;top:282.6px" width="8" height="8" viewBox="0 0 8 8"><ellipse cx="2.6" cy="5.3" rx="2.1" ry="1.7" transform="rotate(-35 2.6 5.3)" fill="none" fill="#e6ea88" stroke="#6a7020" stroke-width="0.9"/><ellipse cx="5.4" cy="2.7" rx="2.1" ry="1.7" transform="rotate(-35 5.4 2.7)" fill="#e6ea88" stroke="#6a7020" stroke-width="0.9"/><ellipse cx="2.6" cy="5.3" rx="0.8" ry="0.5" transform="rotate(-35 2.6 5.3)" fill="#fff"/><ellipse cx="5.4" cy="2.7" rx="0.8" ry="0.5" transform="rotate(-35 5.4 2.7)" fill="#fff"/></svg>
<div class="t" style="left:30.3px;top:282.2px;font-size:7.5px;color:#3a3a3a">draw_tab_content [1780]</div>
<svg class="abs" style="left:20.5px;top:293.8px" width="8" height="8" viewBox="0 0 8 8"><ellipse cx="2.6" cy="5.3" rx="2.1" ry="1.7" transform="rotate(-35 2.6 5.3)" fill="none" fill="#e6ea88" stroke="#6a7020" stroke-width="0.9"/><ellipse cx="5.4" cy="2.7" rx="2.1" ry="1.7" transform="rotate(-35 5.4 2.7)" fill="#e6ea88" stroke="#6a7020" stroke-width="0.9"/><ellipse cx="2.6" cy="5.3" rx="0.8" ry="0.5" transform="rotate(-35 2.6 5.3)" fill="#fff"/><ellipse cx="5.4" cy="2.7" rx="0.8" ry="0.5" transform="rotate(-35 5.4 2.7)" fill="#fff"/></svg>
<div class="t" style="left:30.3px;top:293.4px;font-size:7.5px;color:#3a3a3a">get_bits [73]</div>
<svg class="abs" style="left:20.5px;top:305.0px" width="8" height="8" viewBox="0 0 8 8"><ellipse cx="2.6" cy="5.3" rx="2.1" ry="1.7" transform="rotate(-35 2.6 5.3)" fill="none" fill="#e6ea88" stroke="#6a7020" stroke-width="0.9"/><ellipse cx="5.4" cy="2.7" rx="2.1" ry="1.7" transform="rotate(-35 5.4 2.7)" fill="#e6ea88" stroke="#6a7020" stroke-width="0.9"/><ellipse cx="2.6" cy="5.3" rx="0.8" ry="0.5" transform="rotate(-35 2.6 5.3)" fill="#fff"/><ellipse cx="5.4" cy="2.7" rx="0.8" ry="0.5" transform="rotate(-35 5.4 2.7)" fill="#fff"/></svg>
<div class="t" style="left:30.3px;top:304.6px;font-size:7.5px;color:#3a3a3a">get_val [234]</div>
<svg class="abs" style="left:20.5px;top:316.2px" width="8" height="8" viewBox="0 0 8 8"><ellipse cx="2.6" cy="5.3" rx="2.1" ry="1.7" transform="rotate(-35 2.6 5.3)" fill="none" fill="#e6ea88" stroke="#6a7020" stroke-width="0.9"/><ellipse cx="5.4" cy="2.7" rx="2.1" ry="1.7" transform="rotate(-35 5.4 2.7)" fill="#e6ea88" stroke="#6a7020" stroke-width="0.9"/><ellipse cx="2.6" cy="5.3" rx="0.8" ry="0.5" transform="rotate(-35 2.6 5.3)" fill="#fff"/><ellipse cx="5.4" cy="2.7" rx="0.8" ry="0.5" transform="rotate(-35 5.4 2.7)" fill="#fff"/></svg>
<div class="t" style="left:30.3px;top:315.8px;font-size:7.5px;color:#3a3a3a">init_colors [1814]</div>
<svg class="abs" style="left:20.5px;top:327.4px" width="8" height="8" viewBox="0 0 8 8"><ellipse cx="2.6" cy="5.3" rx="2.1" ry="1.7" transform="rotate(-35 2.6 5.3)" fill="none" fill="#e6ea88" stroke="#6a7020" stroke-width="0.9"/><ellipse cx="5.4" cy="2.7" rx="2.1" ry="1.7" transform="rotate(-35 5.4 2.7)" fill="#e6ea88" stroke="#6a7020" stroke-width="0.9"/><ellipse cx="2.6" cy="5.3" rx="0.8" ry="0.5" transform="rotate(-35 2.6 5.3)" fill="#fff"/><ellipse cx="5.4" cy="2.7" rx="0.8" ry="0.5" transform="rotate(-35 5.4 2.7)" fill="#fff"/></svg>
<div class="t" style="left:30.3px;top:327.0px;font-size:7.5px;color:#3a3a3a">is_gpu_safe_to_read [240]</div>
<svg class="abs" style="left:20.5px;top:338.6px" width="8" height="8" viewBox="0 0 8 8"><ellipse cx="2.6" cy="5.3" rx="2.1" ry="1.7" transform="rotate(-35 2.6 5.3)" fill="none" fill="#e6ea88" stroke="#6a7020" stroke-width="0.9"/><ellipse cx="5.4" cy="2.7" rx="2.1" ry="1.7" transform="rotate(-35 5.4 2.7)" fill="#e6ea88" stroke="#6a7020" stroke-width="0.9"/><ellipse cx="2.6" cy="5.3" rx="0.8" ry="0.5" transform="rotate(-35 2.6 5.3)" fill="#fff"/><ellipse cx="5.4" cy="2.7" rx="0.8" ry="0.5" transform="rotate(-35 5.4 2.7)" fill="#fff"/></svg>
<div class="t" style="left:30.3px;top:338.2px;font-size:7.5px;color:#3a3a3a">read_field [106]</div>
<svg class="abs" style="left:20.5px;top:349.8px" width="8" height="8" viewBox="0 0 8 8"><ellipse cx="2.6" cy="5.3" rx="2.1" ry="1.7" transform="rotate(-35 2.6 5.3)" fill="none" fill="#e6ea88" stroke="#6a7020" stroke-width="0.9"/><ellipse cx="5.4" cy="2.7" rx="2.1" ry="1.7" transform="rotate(-35 5.4 2.7)" fill="#e6ea88" stroke="#6a7020" stroke-width="0.9"/><ellipse cx="2.6" cy="5.3" rx="0.8" ry="0.5" transform="rotate(-35 2.6 5.3)" fill="#fff"/><ellipse cx="5.4" cy="2.7" rx="0.8" ry="0.5" transform="rotate(-35 5.4 2.7)" fill="#fff"/></svg>
<div class="t" style="left:30.3px;top:349.4px;font-size:7.5px;color:#3a3a3a">set_bits [77]</div>
<svg class="abs" style="left:20.5px;top:361.0px" width="8" height="8" viewBox="0 0 8 8"><ellipse cx="2.6" cy="5.3" rx="2.1" ry="1.7" transform="rotate(-35 2.6 5.3)" fill="none" fill="#e6ea88" stroke="#6a7020" stroke-width="0.9"/><ellipse cx="5.4" cy="2.7" rx="2.1" ry="1.7" transform="rotate(-35 5.4 2.7)" fill="#e6ea88" stroke="#6a7020" stroke-width="0.9"/><ellipse cx="2.6" cy="5.3" rx="0.8" ry="0.5" transform="rotate(-35 2.6 5.3)" fill="#fff"/><ellipse cx="5.4" cy="2.7" rx="0.8" ry="0.5" transform="rotate(-35 5.4 2.7)" fill="#fff"/></svg>
<div class="t" style="left:30.3px;top:360.6px;font-size:7.5px;color:#3a3a3a">set_gpu_power_on [250]</div>
<svg class="abs" style="left:20.5px;top:372.2px" width="8" height="8" viewBox="0 0 8 8"><ellipse cx="2.6" cy="5.3" rx="2.1" ry="1.7" transform="rotate(-35 2.6 5.3)" fill="none" fill="#e6ea88" stroke="#6a7020" stroke-width="0.9"/><ellipse cx="5.4" cy="2.7" rx="2.1" ry="1.7" transform="rotate(-35 5.4 2.7)" fill="#e6ea88" stroke="#6a7020" stroke-width="0.9"/><ellipse cx="2.6" cy="5.3" rx="0.8" ry="0.5" transform="rotate(-35 2.6 5.3)" fill="#fff"/><ellipse cx="5.4" cy="2.7" rx="0.8" ry="0.5" transform="rotate(-35 5.4 2.7)" fill="#fff"/></svg>
<div class="t" style="left:30.3px;top:371.8px;font-size:7.5px;color:#3a3a3a">tui [1821]</div>
<svg class="abs" style="left:20.5px;top:383.4px" width="8" height="8" viewBox="0 0 8 8"><ellipse cx="2.6" cy="5.3" rx="2.1" ry="1.7" transform="rotate(-35 2.6 5.3)" fill="none" fill="#e6ea88" stroke="#6a7020" stroke-width="0.9"/><ellipse cx="5.4" cy="2.7" rx="2.1" ry="1.7" transform="rotate(-35 5.4 2.7)" fill="#e6ea88" stroke="#6a7020" stroke-width="0.9"/><ellipse cx="2.6" cy="5.3" rx="0.8" ry="0.5" transform="rotate(-35 2.6 5.3)" fill="#fff"/><ellipse cx="5.4" cy="2.7" rx="0.8" ry="0.5" transform="rotate(-35 5.4 2.7)" fill="#fff"/></svg>
<div class="t" style="left:30.3px;top:383.0px;font-size:7.5px;color:#3a3a3a">write_field [114]</div>
<svg class="abs" style="left:3.0px;top:397.0px" width="6" height="4" viewBox="0 0 6 4"><path d="M0 0 H5.5 L2.75 3.2Z" fill="#333"/></svg>
<svg class="abs" style="left:11.0px;top:394.6px" width="8" height="8" viewBox="0 0 8 8"><circle cx="4" cy="4" r="2.5" fill="#607090"/></svg>
<div class="t" style="left:20.8px;top:394.2px;font-size:7.5px;color:#3a3a3a">Variables</div>
</div>
<div class="abs" style="left:595px;top:86px;width:421px;height:393px;overflow:hidden">
<div class="abs" style="left:344.6px;top:0;width:1px;height:393px;background:#e4e4e4"></div>
<div class="abs" style="left:30px;top:0;width:7px;z-index:0;height:393px;background:linear-gradient(90deg,#d5d5d5,#fff)"></div>
<div class="abs" style="left:34px;top:0;width:1px;height:393px;background:#404040"></div>
<div class="t mono" style="left:5px;top:1.7px;font-size:6.6px;line-height:8.0px;color:#000;transform:scaleY(1.12);transform-origin:0 50%">1279</div>
<div class="t mono" style="left:37.90px;top:1.4px;font-size:7.133px;line-height:8.0px;color:#282828">            <span style="color:#1c1c58;font-weight:bold">else</span><span style="color:#404040">:</span></div>
<div class="t mono" style="left:5px;top:9.7px;font-size:6.6px;line-height:8.0px;color:#000;transform:scaleY(1.12);transform-origin:0 50%">1280</div>
<div class="t mono" style="left:37.90px;top:9.4px;font-size:7.133px;line-height:8.0px;color:#282828">                disp_val <span style="color:#404040">=</span> <span style="color:#882020;font-weight:bold">str</span><span style="color:#404040">(</span>val<span style="color:#404040">)</span></div>
<div class="t mono" style="left:5px;top:17.7px;font-size:6.6px;line-height:8.0px;color:#000;transform:scaleY(1.12);transform-origin:0 50%">1281</div>
<div class="t mono" style="left:37.90px;top:17.4px;font-size:7.133px;line-height:8.0px;color:#282828">                extra <span style="color:#404040">=</span> <span style="color:#d4a050">f"</span><span style="color:#d4a050">Range: </span><span style="color:#d4a050">{</span>val_range<span style="color:#d4a050">}</span><span style="color:#d4a050">"</span> <span style="color:#1c1c58;font-weight:bold">if</span> val_range <span style="color:#1c1c58;font-weight:bold">else</span> <span style="color:#d4a050">""</span></div>
<div class="t mono" style="left:5px;top:25.7px;font-size:6.6px;line-height:8.0px;color:#000;transform:scaleY(1.12);transform-origin:0 50%">1282</div>
<div class="t mono" style="left:5px;top:33.7px;font-size:6.6px;line-height:8.0px;color:#000;transform:scaleY(1.12);transform-origin:0 50%">1283</div>
<div class="t mono" style="left:37.90px;top:33.4px;font-size:7.133px;line-height:8.0px;color:#282828">            display_lines<span style="color:#404040">.</span>append<span style="color:#404040">(</span><span style="color:#404040">(</span><span style="color:#404040">(</span>name<span style="color:#404040">,</span> disp_val<span style="color:#404040">,</span> extra<span style="color:#404040">)</span><span style="color:#404040">,</span> <span style="color:#d4a050">"field"</span><span style="color:#404040">,</span> idx<span style="color:#404040">)</span><span style="color:#404040">)</span></div>
<div class="t mono" style="left:5px;top:41.7px;font-size:6.6px;line-height:8.0px;color:#000;transform:scaleY(1.12);transform-origin:0 50%">1284</div>
<div class="t mono" style="left:37.90px;top:41.4px;font-size:7.133px;line-height:8.0px;color:#282828">            idx <span style="color:#404040">+</span><span style="color:#404040">=</span> <span style="color:#2f7a3a">1</span></div>
<div class="t mono" style="left:5px;top:49.7px;font-size:6.6px;line-height:8.0px;color:#000;transform:scaleY(1.12);transform-origin:0 50%">1285</div>
<div class="t mono" style="left:5px;top:57.7px;font-size:6.6px;line-height:8.0px;color:#000;transform:scaleY(1.12);transform-origin:0 50%">1286</div>
<div class="t mono" style="left:37.90px;top:57.4px;font-size:7.133px;line-height:8.0px;color:#282828">    mem_grf <span style="color:#404040">=</span> Registers<span style="color:#404040">(</span>GRF_GPU_BASE<span style="color:#404040">,</span> <span style="color:#2f7a3a">0x1000</span><span style="color:#404040">)</span></div>
<div class="t mono" style="left:5px;top:65.7px;font-size:6.6px;line-height:8.0px;color:#000;transform:scaleY(1.12);transform-origin:0 50%">1287</div>
<div class="t mono" style="left:37.90px;top:65.4px;font-size:7.133px;line-height:8.0px;color:#282828">    gpu_pvtpll_freq <span style="color:#404040">=</span> read_pvtpll_freq<span style="color:#404040">(</span>mem_grf<span style="color:#404040">)</span></div>
<div class="t mono" style="left:5px;top:73.7px;font-size:6.6px;line-height:8.0px;color:#000;transform:scaleY(1.12);transform-origin:0 50%">1288</div>
<div class="t mono" style="left:37.90px;top:73.4px;font-size:7.133px;line-height:8.0px;color:#282828">    mem_grf<span style="color:#404040">.</span>close<span style="color:#404040">(</span><span style="color:#404040">)</span></div>
<div class="t mono" style="left:5px;top:81.7px;font-size:6.6px;line-height:8.0px;color:#000;transform:scaleY(1.12);transform-origin:0 50%">1289</div>
<div class="t mono" style="left:5px;top:89.7px;font-size:6.6px;line-height:8.0px;color:#000;transform:scaleY(1.12);transform-origin:0 50%">1290</div>
<div class="t mono" style="left:37.90px;top:89.4px;font-size:7.133px;line-height:8.0px;color:#282828">    gpu_src_sel <span style="color:#404040">=</span> get_val<span style="color:#404040">(</span><span style="color:#d4a050">"gpu_src_sel"</span><span style="color:#404040">,</span> FLAT_FIELDS<span style="color:#404040">)</span></div>
<div class="t mono" style="left:5px;top:97.7px;font-size:6.6px;line-height:8.0px;color:#000;transform:scaleY(1.12);transform-origin:0 50%">1291</div>
<div class="t mono" style="left:37.90px;top:97.4px;font-size:7.133px;line-height:8.0px;color:#282828">    gpu_src_div <span style="color:#404040">=</span> get_val<span style="color:#404040">(</span><span style="color:#d4a050">"gpu_src_div"</span><span style="color:#404040">,</span> FLAT_FIELDS<span style="color:#404040">)</span></div>
<div class="t mono" style="left:5px;top:105.7px;font-size:6.6px;line-height:8.0px;color:#000;transform:scaleY(1.12);transform-origin:0 50%">1292</div>
<div class="t mono" style="left:37.90px;top:105.4px;font-size:7.133px;line-height:8.0px;color:#282828">    gpu_src_mux_sel <span style="color:#404040">=</span> get_val<span style="color:#404040">(</span><span style="color:#d4a050">"gpu_src_mux_sel"</span><span style="color:#404040">,</span> FLAT_FIELDS<span style="color:#404040">)</span></div>
<div class="t mono" style="left:5px;top:113.7px;font-size:6.6px;line-height:8.0px;color:#000;transform:scaleY(1.12);transform-origin:0 50%">1293</div>
<div class="t mono" style="left:5px;top:121.7px;font-size:6.6px;line-height:8.0px;color:#000;transform:scaleY(1.12);transform-origin:0 50%">1294</div>
<div class="t mono" style="left:37.90px;top:121.4px;font-size:7.133px;line-height:8.0px;color:#282828">    <span style="color:#1c1c58;font-weight:bold">if</span> gpu_src_sel <span style="color:#404040">=</span><span style="color:#404040">=</span> <span style="color:#d4a050">"aupll"</span><span style="color:#404040">:</span></div>
<div class="t mono" style="left:5px;top:129.7px;font-size:6.6px;line-height:8.0px;color:#000;transform:scaleY(1.12);transform-origin:0 50%">1295</div>
<div class="t mono" style="left:37.90px;top:129.4px;font-size:7.133px;line-height:8.0px;color:#282828">        gpu_src_mux_clk <span style="color:#404040">=</span> AUPLL_FREQ <span style="color:#404040">/</span> <span style="color:#404040">(</span>gpu_src_div <span style="color:#404040">+</span> <span style="color:#2f7a3a">1</span><span style="color:#404040">)</span></div>
<div class="t mono" style="left:5px;top:137.7px;font-size:6.6px;line-height:8.0px;color:#000;transform:scaleY(1.12);transform-origin:0 50%">1296</div>
<div class="t mono" style="left:37.90px;top:137.4px;font-size:7.133px;line-height:8.0px;color:#282828">    <span style="color:#1c1c58;font-weight:bold">elif</span> gpu_src_sel <span style="color:#404040">=</span><span style="color:#404040">=</span> <span style="color:#d4a050">"cpll"</span><span style="color:#404040">:</span></div>
<div class="t mono" style="left:5px;top:145.7px;font-size:6.6px;line-height:8.0px;color:#000;transform:scaleY(1.12);transform-origin:0 50%">1297</div>
<div class="t mono" style="left:37.90px;top:145.4px;font-size:7.133px;line-height:8.0px;color:#282828">        gpu_src_mux_clk <span style="color:#404040">=</span> CPLL_FREQ <span style="color:#404040">/</span> <span style="color:#404040">(</span>gpu_src_div <span style="color:#404040">+</span> <span style="color:#2f7a3a">1</span><span style="color:#404040">)</span></div>
<div class="t mono" style="left:5px;top:153.7px;font-size:6.6px;line-height:8.0px;color:#000;transform:scaleY(1.12);transform-origin:0 50%">1298</div>
<div class="t mono" style="left:37.90px;top:153.4px;font-size:7.133px;line-height:8.0px;color:#282828">    <span style="color:#1c1c58;font-weight:bold">elif</span> gpu_src_sel <span style="color:#404040">=</span><span style="color:#404040">=</span> <span style="color:#d4a050">"gpll"</span><span style="color:#404040">:</span></div>
<div class="t mono" style="left:5px;top:161.7px;font-size:6.6px;line-height:8.0px;color:#000;transform:scaleY(1.12);transform-origin:0 50%">1299</div>
<div class="t mono" style="left:37.90px;top:161.4px;font-size:7.133px;line-height:8.0px;color:#282828">        gpu_src_mux_clk <span style="color:#404040">=</span> GPLL_FREQ <span style="color:#404040">/</span> <span style="color:#404040">(</span>gpu_src_div <span style="color:#404040">+</span> <span style="color:#2f7a3a">1</span><span style="color:#404040">)</span></div>
<div class="t mono" style="left:5px;top:169.7px;font-size:6.6px;line-height:8.0px;color:#000;transform:scaleY(1.12);transform-origin:0 50%">1300</div>
<div class="t mono" style="left:37.90px;top:169.4px;font-size:7.133px;line-height:8.0px;color:#282828">    <span style="color:#1c1c58;font-weight:bold">elif</span> gpu_src_sel <span style="color:#404040">=</span><span style="color:#404040">=</span> <span style="color:#d4a050">"npll"</span><span style="color:#404040">:</span></div>
<div class="t mono" style="left:5px;top:177.7px;font-size:6.6px;line-height:8.0px;color:#000;transform:scaleY(1.12);transform-origin:0 50%">1301</div>
<div class="t mono" style="left:37.90px;top:177.4px;font-size:7.133px;line-height:8.0px;color:#282828">        gpu_src_mux_clk <span style="color:#404040">=</span> NPLL_FREQ <span style="color:#404040">/</span> <span style="color:#404040">(</span>gpu_src_div <span style="color:#404040">+</span> <span style="color:#2f7a3a">1</span><span style="color:#404040">)</span></div>
<div class="t mono" style="left:5px;top:185.7px;font-size:6.6px;line-height:8.0px;color:#000;transform:scaleY(1.12);transform-origin:0 50%">1302</div>
<div class="t mono" style="left:37.90px;top:185.4px;font-size:7.133px;line-height:8.0px;color:#282828">    <span style="color:#1c1c58;font-weight:bold">elif</span> gpu_src_sel <span style="color:#404040">=</span><span style="color:#404040">=</span> <span style="color:#d4a050">"spll"</span><span style="color:#404040">:</span></div>
<div class="t mono" style="left:5px;top:193.7px;font-size:6.6px;line-height:8.0px;color:#000;transform:scaleY(1.12);transform-origin:0 50%">1303</div>
<div class="t mono" style="left:37.90px;top:193.4px;font-size:7.133px;line-height:8.0px;color:#282828">        gpu_src_mux_clk <span style="color:#404040">=</span> SPLL_FREQ <span style="color:#404040">/</span> <span style="color:#404040">(</span>gpu_src_div <span style="color:#404040">+</span> <span style="color:#2f7a3a">1</span><span style="color:#404040">)</span></div>
<div class="t mono" style="left:5px;top:201.7px;font-size:6.6px;line-height:8.0px;color:#000;transform:scaleY(1.12);transform-origin:0 50%">1304</div>
<div class="t mono" style="left:37.90px;top:201.4px;font-size:7.133px;line-height:8.0px;color:#282828">    <span style="color:#1c1c58;font-weight:bold">else</span><span style="color:#404040">:</span></div>
<div class="t mono" style="left:5px;top:209.7px;font-size:6.6px;line-height:8.0px;color:#000;transform:scaleY(1.12);transform-origin:0 50%">1305</div>
<div class="t mono" style="left:37.90px;top:209.4px;font-size:7.133px;line-height:8.0px;color:#282828">        gpu_src_mux_clk <span style="color:#404040">=</span> <span style="color:#2f7a3a">0</span></div>
<div class="t mono" style="left:5px;top:217.7px;font-size:6.6px;line-height:8.0px;color:#000;transform:scaleY(1.12);transform-origin:0 50%">1306</div>
<div class="t mono" style="left:5px;top:225.7px;font-size:6.6px;line-height:8.0px;color:#000;transform:scaleY(1.12);transform-origin:0 50%">1307</div>
<div class="t mono" style="left:37.90px;top:225.4px;font-size:7.133px;line-height:8.0px;color:#282828">    <span style="color:#1c1c58;font-weight:bold">if</span> gpu_src_mux_sel <span style="color:#404040">=</span><span style="color:#404040">=</span> <span style="color:#d4a050">"gpu_src"</span><span style="color:#404040">:</span></div>
<div class="t mono" style="left:5px;top:233.7px;font-size:6.6px;line-height:8.0px;color:#000;transform:scaleY(1.12);transform-origin:0 50%">1308</div>
<div class="t mono" style="left:37.90px;top:233.4px;font-size:7.133px;line-height:8.0px;color:#282828">        gpu_clk_freq <span style="color:#404040">=</span> gpu_src_mux_clk</div>
<div class="t mono" style="left:5px;top:241.7px;font-size:6.6px;line-height:8.0px;color:#000;transform:scaleY(1.12);transform-origin:0 50%">1309</div>
<div class="t mono" style="left:37.90px;top:241.4px;font-size:7.133px;line-height:8.0px;color:#282828">    <span style="color:#1c1c58;font-weight:bold">elif</span> gpu_src_mux_sel <span style="color:#404040">=</span><span style="color:#404040">=</span> <span style="color:#d4a050">"PVTPLL"</span><span style="color:#404040">:</span></div>
<div class="t mono" style="left:5px;top:249.7px;font-size:6.6px;line-height:8.0px;color:#000;transform:scaleY(1.12);transform-origin:0 50%">1310</div>
<div class="t mono" style="left:37.90px;top:249.4px;font-size:7.133px;line-height:8.0px;color:#282828">        gpu_clk_freq <span style="color:#404040">=</span> gpu_pvtpll_freq</div>
<div class="t mono" style="left:5px;top:257.7px;font-size:6.6px;line-height:8.0px;color:#000;transform:scaleY(1.12);transform-origin:0 50%">1311</div>
<div class="t mono" style="left:37.90px;top:257.4px;font-size:7.133px;line-height:8.0px;color:#282828">    <span style="color:#1c1c58;font-weight:bold">else</span><span style="color:#404040">:</span></div>
<div class="t mono" style="left:5px;top:265.7px;font-size:6.6px;line-height:8.0px;color:#000;transform:scaleY(1.12);transform-origin:0 50%">1312</div>
<div class="t mono" style="left:37.90px;top:265.4px;font-size:7.133px;line-height:8.0px;color:#282828">        gpu_clk_freq <span style="color:#404040">=</span> <span style="color:#2f7a3a">0</span></div>
<div class="t mono" style="left:5px;top:273.7px;font-size:6.6px;line-height:8.0px;color:#000;transform:scaleY(1.12);transform-origin:0 50%">1313</div>
<div class="t mono" style="left:5px;top:281.7px;font-size:6.6px;line-height:8.0px;color:#000;transform:scaleY(1.12);transform-origin:0 50%">1314</div>
<div class="t mono" style="left:37.90px;top:281.4px;font-size:7.133px;line-height:8.0px;color:#282828">    freq_lines <span style="color:#404040">=</span> <span style="color:#404040">[</span></div>
<div class="t mono" style="left:5px;top:289.7px;font-size:6.6px;line-height:8.0px;color:#000;transform:scaleY(1.12);transform-origin:0 50%">1315</div>
<div class="t mono" style="left:37.90px;top:289.4px;font-size:7.133px;line-height:8.0px;color:#282828">        <span style="color:#d4a050">f"</span><span style="color:#d4a050">AUPLL Frequency:          </span><span style="color:#d4a050">{</span>AUPLL_FREQ<span style="color:#d4a050">:.0f}</span><span style="color:#d4a050"> MHz</span><span style="color:#d4a050">"</span><span style="color:#404040">,</span></div>
<div class="t mono" style="left:5px;top:297.7px;font-size:6.6px;line-height:8.0px;color:#000;transform:scaleY(1.12);transform-origin:0 50%">1316</div>
<div class="t mono" style="left:37.90px;top:297.4px;font-size:7.133px;line-height:8.0px;color:#282828">        <span style="color:#d4a050">f"</span><span style="color:#d4a050">CPLL Frequency:           </span><span style="color:#d4a050">{</span>CPLL_FREQ<span style="color:#d4a050">:.0f}</span><span style="color:#d4a050"> MHz</span><span style="color:#d4a050">"</span><span style="color:#404040">,</span></div>
<div class="t mono" style="left:5px;top:305.7px;font-size:6.6px;line-height:8.0px;color:#000;transform:scaleY(1.12);transform-origin:0 50%">1317</div>
<div class="t mono" style="left:37.90px;top:305.4px;font-size:7.133px;line-height:8.0px;color:#282828">        <span style="color:#d4a050">f"</span><span style="color:#d4a050">GPLL Frequency:           </span><span style="color:#d4a050">{</span>GPLL_FREQ<span style="color:#d4a050">:.0f}</span><span style="color:#d4a050"> MHz</span><span style="color:#d4a050">"</span><span style="color:#404040">,</span></div>
<div class="t mono" style="left:5px;top:313.7px;font-size:6.6px;line-height:8.0px;color:#000;transform:scaleY(1.12);transform-origin:0 50%">1318</div>
<div class="t mono" style="left:37.90px;top:313.4px;font-size:7.133px;line-height:8.0px;color:#282828">        <span style="color:#d4a050">f"</span><span style="color:#d4a050">NPLL Frequency:           </span><span style="color:#d4a050">{</span>NPLL_FREQ<span style="color:#d4a050">:.0f}</span><span style="color:#d4a050"> MHz</span><span style="color:#d4a050">"</span><span style="color:#404040">,</span></div>
<div class="t mono" style="left:5px;top:321.7px;font-size:6.6px;line-height:8.0px;color:#000;transform:scaleY(1.12);transform-origin:0 50%">1319</div>
<div class="t mono" style="left:37.90px;top:321.4px;font-size:7.133px;line-height:8.0px;color:#282828">        <span style="color:#d4a050">f"</span><span style="color:#d4a050">SPLL Frequency:           </span><span style="color:#d4a050">{</span>SPLL_FREQ<span style="color:#d4a050">:.0f}</span><span style="color:#d4a050"> MHz</span><span style="color:#d4a050">"</span><span style="color:#404040">,</span></div>
<div class="t mono" style="left:5px;top:329.7px;font-size:6.6px;line-height:8.0px;color:#000;transform:scaleY(1.12);transform-origin:0 50%">1320</div>
<div class="t mono" style="left:37.90px;top:329.4px;font-size:7.133px;line-height:8.0px;color:#282828">        <span style="color:#d4a050">f"</span><span style="color:#d4a050">GPU SRC MUX Freq:         </span><span style="color:#d4a050">{</span>gpu_src_mux_clk<span style="color:#d4a050">:.0f}</span><span style="color:#d4a050"> MHz from </span><span style="color:#d4a050">{</span>gpu_src_sel<span style="color:#d4a050">}</span><span style="color:#d4a050">"</span><span style="color:#404040">,</span></div>
<div class="t mono" style="left:5px;top:337.7px;font-size:6.6px;line-height:8.0px;color:#000;transform:scaleY(1.12);transform-origin:0 50%">1321</div>
<div class="t mono" style="left:37.90px;top:337.4px;font-size:7.133px;line-height:8.0px;color:#282828">        <span style="color:#d4a050">f"</span><span style="color:#d4a050">GPU PVTPLL Freq:          </span><span style="color:#d4a050">{</span>gpu_pvtpll_freq<span style="color:#d4a050">:.0f}</span><span style="color:#d4a050"> MHz</span><span style="color:#d4a050">"</span><span style="color:#404040">,</span></div>
<div class="t mono" style="left:5px;top:345.7px;font-size:6.6px;line-height:8.0px;color:#000;transform:scaleY(1.12);transform-origin:0 50%">1322</div>
<div class="t mono" style="left:37.90px;top:345.4px;font-size:7.133px;line-height:8.0px;color:#282828">        <span style="color:#d4a050">f"</span><span style="color:#d4a050">--------------</span><span style="color:#d4a050">"</span><span style="color:#404040">,</span></div>
<div class="t mono" style="left:5px;top:353.7px;font-size:6.6px;line-height:8.0px;color:#000;transform:scaleY(1.12);transform-origin:0 50%">1323</div>
<div class="t mono" style="left:37.90px;top:353.4px;font-size:7.133px;line-height:8.0px;color:#282828">        <span style="color:#d4a050">f"</span><span style="color:#d4a050">GPU Frequency:            </span><span style="color:#d4a050">{</span>gpu_clk_freq<span style="color:#d4a050">:.0f}</span><span style="color:#d4a050"> MHz from </span><span style="color:#d4a050">{</span>gpu_src_mux_sel<span style="color:#d4a050">}</span><span style="color:#d4a050">"</span><span style="color:#404040">,</span></div>
<div class="t mono" style="left:5px;top:361.7px;font-size:6.6px;line-height:8.0px;color:#000;transform:scaleY(1.12);transform-origin:0 50%">1324</div>
<div class="t mono" style="left:37.90px;top:361.4px;font-size:7.133px;line-height:8.0px;color:#282828">    <span style="color:#404040">]</span></div>
<div class="t mono" style="left:5px;top:369.7px;font-size:6.6px;line-height:8.0px;color:#000;transform:scaleY(1.12);transform-origin:0 50%">1325</div>
<div class="t mono" style="left:5px;top:377.7px;font-size:6.6px;line-height:8.0px;color:#000;transform:scaleY(1.12);transform-origin:0 50%">1326</div>
<div class="t mono" style="left:37.90px;top:377.4px;font-size:7.133px;line-height:8.0px;color:#282828">    <span style="color:#b84060"># Add spacer before frequency section</span></div>
<div class="t mono" style="left:5px;top:385.7px;font-size:6.6px;line-height:8.0px;color:#000;transform:scaleY(1.12);transform-origin:0 50%">1327</div>
<div class="t mono" style="left:37.90px;top:385.4px;font-size:7.133px;line-height:8.0px;color:#282828">    display_lines<span style="color:#404040">.</span>append<span style="color:#404040">(</span><span style="color:#404040">(</span><span style="color:#d4a050">""</span><span style="color:#404040">,</span> <span style="color:#d4a050">"spacer"</span><span style="color:#404040">)</span><span style="color:#404040">)</span></div>
<div class="abs" style="left:32px;top:2.0px;width:5px;height:5px;background:#fff;border:1px solid #404040"></div>
<div class="abs" style="left:33px;top:3.9px;width:3px;height:1px;background:#404040"></div>
<div class="abs" style="left:32px;top:122.0px;width:5px;height:5px;background:#fff;border:1px solid #404040"></div>
<div class="abs" style="left:33px;top:123.9px;width:3px;height:1px;background:#404040"></div>
<div class="abs" style="left:32px;top:138.0px;width:5px;height:5px;background:#fff;border:1px solid #404040"></div>
<div class="abs" style="left:33px;top:139.9px;width:3px;height:1px;background:#404040"></div>
<div class="abs" style="left:32px;top:154.0px;width:5px;height:5px;background:#fff;border:1px solid #404040"></div>
<div class="abs" style="left:33px;top:155.9px;width:3px;height:1px;background:#404040"></div>
<div class="abs" style="left:32px;top:170.0px;width:5px;height:5px;background:#fff;border:1px solid #404040"></div>
<div class="abs" style="left:33px;top:171.9px;width:3px;height:1px;background:#404040"></div>
<div class="abs" style="left:32px;top:186.0px;width:5px;height:5px;background:#fff;border:1px solid #404040"></div>
<div class="abs" style="left:33px;top:187.9px;width:3px;height:1px;background:#404040"></div>
<div class="abs" style="left:32px;top:202.0px;width:5px;height:5px;background:#fff;border:1px solid #404040"></div>
<div class="abs" style="left:33px;top:203.9px;width:3px;height:1px;background:#404040"></div>
<div class="abs" style="left:32px;top:226.0px;width:5px;height:5px;background:#fff;border:1px solid #404040"></div>
<div class="abs" style="left:33px;top:227.9px;width:3px;height:1px;background:#404040"></div>
<div class="abs" style="left:32px;top:242.0px;width:5px;height:5px;background:#fff;border:1px solid #404040"></div>
<div class="abs" style="left:33px;top:243.9px;width:3px;height:1px;background:#404040"></div>
<div class="abs" style="left:32px;top:258.0px;width:5px;height:5px;background:#fff;border:1px solid #404040"></div>
<div class="abs" style="left:33px;top:259.9px;width:3px;height:1px;background:#404040"></div>
<div class="abs" style="left:32px;top:282.0px;width:5px;height:5px;background:#fff;border:1px solid #404040"></div>
<div class="abs" style="left:33px;top:283.9px;width:3px;height:1px;background:#404040"></div>
<div class="abs" style="left:35px;top:19.9px;width:2px;height:1px;background:#404040"></div>
<div class="abs" style="left:35px;top:43.9px;width:2px;height:1px;background:#404040"></div>
<div class="abs" style="left:35px;top:131.9px;width:2px;height:1px;background:#404040"></div>
<div class="abs" style="left:35px;top:147.9px;width:2px;height:1px;background:#404040"></div>
<div class="abs" style="left:35px;top:163.9px;width:2px;height:1px;background:#404040"></div>
<div class="abs" style="left:35px;top:179.9px;width:2px;height:1px;background:#404040"></div>
<div class="abs" style="left:35px;top:195.9px;width:2px;height:1px;background:#404040"></div>
<div class="abs" style="left:35px;top:211.9px;width:2px;height:1px;background:#404040"></div>
<div class="abs" style="left:35px;top:235.9px;width:2px;height:1px;background:#404040"></div>
<div class="abs" style="left:35px;top:251.9px;width:2px;height:1px;background:#404040"></div>
<div class="abs" style="left:35px;top:267.9px;width:2px;height:1px;background:#404040"></div>
<div class="abs" style="left:35px;top:355.9px;width:2px;height:1px;background:#404040"></div>
<svg class="abs" style="left:50.5px;top:59.80000000000001px" width="4" height="10" viewBox="0 0 4 10"><path d="M0.3 0.5 H3.5 M1.9 0.5 V9.3 M0.3 9.3 H3.5" stroke="#303030" stroke-width="0.9" fill="none"/></svg>
</div>
<div class="abs" style="left:595px;top:479px;width:421px;height:6px;background:#d6d6d6"></div>
<div class="abs" style="left:599px;top:480px;width:147px;height:3px;border-radius:2px;background:#8a8a8a"></div>
<div class="abs" style="left:1016px;top:86px;width:7px;height:399px;background:#d2d2d2"></div>
<div class="abs" style="left:1018px;top:330px;width:3.2px;height:20px;border-radius:2px;background:#808080"></div>
<div class="abs" style="left:1016px;top:479px;width:7px;height:6px;background:#f4f4f4"></div>
<svg class="abs" style="left:535px;top:491px" width="6" height="4" viewBox="0 0 6 4"><path d="M0 4 L3 0 L6 4Z" fill="#b8b8b8"/></svg>
<div class="t" style="left:526px;top:515.8px;font-size:7.6px;color:#404040;">Status</div>
<svg class="abs" style="left:533px;top:544px" width="7" height="4" viewBox="0 0 7 4"><path d="M0 0 H7 L3.5 4Z" fill="#222"/></svg>
<div class="abs" style="left:559px;top:499px;width:2px;height:41px;background:#4a90d9"></div>
<div class="t mono" style="left:563px;top:490.7px;font-size:6.28px;color:#202020;transform:scaleY(1.1);transform-origin:0 0">16:32:16: This is Geany 1.37.1.</div>
<div class="t mono" style="left:563px;top:502.2px;font-size:6.28px;color:#202020;transform:scaleY(1.1);transform-origin:0 0">16:32:16: File /home/orangepi/Documents/oc/rk3588_octool_v8.py opened (1).</div>
<div class="abs" style="left:513px;top:553px;width:510px;height:1px;background:#dad9d7"></div>
<div class="t" style="left:520px;top:559.5px;font-size:7.6px;color:#404040;">line: 469 / 1992</div>
<div class="t" style="left:590.5px;top:559.5px;font-size:7.6px;color:#404040;">col: 0</div>
<div class="t" style="left:624.5px;top:559.5px;font-size:7.6px;color:#404040;">sel: 0</div>
<div class="t" style="left:658.5px;top:559.5px;font-size:7.6px;color:#404040;">INS</div>
<div class="t" style="left:683.5px;top:559.5px;font-size:7.6px;color:#404040;">TAB</div>
<div class="t" style="left:709.5px;top:559.5px;font-size:7.6px;color:#404040;">mode: LF</div>
<div class="t" style="left:754px;top:559.5px;font-size:7.6px;color:#404040;">encoding: UTF-8</div>
<div class="t" style="left:823.5px;top:559.5px;font-size:7.6px;color:#404040;">filetype: Python</div>
<div class="t" style="left:890.5px;top:559.5px;font-size:7.6px;color:#404040;">scope: draw_bigcore0_ui</div>
</div></body></html>
